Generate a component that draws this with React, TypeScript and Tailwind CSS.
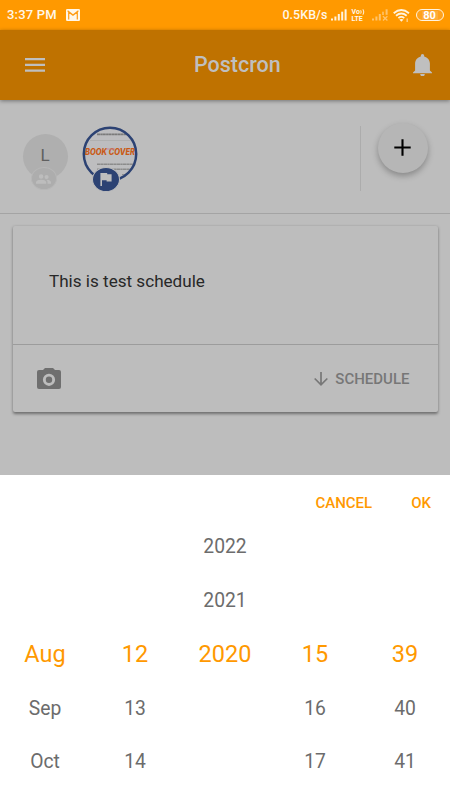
import React from "react";

const months = ["", "", "Aug", "Sep", "Oct"];
const days = ["", "", "12", "13", "14"];
const years = ["2022", "2021", "2020", "", ""];
const hours = ["", "", "15", "16", "17"];
const minutes = ["", "", "39", "40", "41"];

function SignalBars() {
  return (
    <svg width="16" height="12" viewBox="0 0 16 12" fill="#fff3df">
      <rect x="0" y="9.5" width="2" height="2" />
      <rect x="3.4" y="7.5" width="2" height="4" />
      <rect x="6.8" y="5" width="2" height="6.5" />
      <rect x="10.2" y="2.7" width="2" height="8.8" />
      <rect x="13.6" y="0.3" width="2" height="11.2" />
    </svg>
  );
}

function NoSignalBars() {
  return (
    <svg width="16" height="12" viewBox="0 0 16 12" fill="#ffc46c">
      <rect x="0" y="9.5" width="2" height="2" />
      <rect x="3.4" y="7.5" width="2" height="4" />
      <rect x="6.8" y="5" width="2" height="6.5" />
      <rect x="10.2" y="2.7" width="1.6" height="3.3" />
      <rect x="13.6" y="0.3" width="2" height="5.5" />
      <path d="M11 7.2l4.4 4.3M15.4 7.2L11 11.5" stroke="#ffc46c" strokeWidth="1.3" />
    </svg>
  );
}

function StatusBar() {
  return (
    <div className="flex h-[30px] items-center bg-[#ff9900] pl-[7px] pr-[6.5px] text-[#fff7ea]">
      <span className="w-[59px] whitespace-nowrap text-[13px] font-medium leading-[30px] tracking-[0.2px]">3:37 PM</span>
      <svg className="block" width="14" height="12" viewBox="0 0 14 12">
        <rect width="14" height="12" rx="1.3" fill="#fff7ea" />
        <path d="M2.7 10.5V3L7 6.3 11.3 3v7.5M1.6 1.8L7 6l5.4-4.2" fill="none" stroke="#ff9c14" strokeWidth="1.2" />
      </svg>
      <div className="ml-auto flex items-center">
        <span className="mr-[3px] whitespace-nowrap text-[12.4px] font-medium leading-[30px] tracking-[0.1px]">0.5KB/s</span>
        <SignalBars />
        <div className="ml-[5px] mr-[6px] flex w-[14px] flex-col gap-px text-[7px] font-bold leading-[6px]">
          <span className="flex h-[6px] items-center">
            Vo
            <svg width="5" height="6" viewBox="0 0 5 6" fill="none" stroke="#fff3df" strokeWidth="1">
              <path d="M.7 1.3q1 1.7 0 3.4M3 .3q1.6 2.7 0 5.4" />
            </svg>
          </span>
          <span className="h-[6px]">LTE</span>
        </div>
        <NoSignalBars />
        <svg className="ml-[5.5px] mr-[5.5px]" width="17" height="13" viewBox="0 0 17 13" fill="none" stroke="#fff3df" strokeWidth="1.8">
          <path d="M.7 4.2Q8.3-2.2 16 4.2M3 6.7q5.3-4.5 10.7 0M5.4 9.1q2.9-2.4 5.9 0" />
          <path d="M6.3 10.6q2-1.2 4.2 0L8.4 12.8z" fill="#fff3df" stroke="none" />
          <path d="M14.2 9.5v3.5" strokeWidth="1.4" stroke="#ffd08a" />
        </svg>
        <div className="flex h-[12px] w-[28px] items-center justify-center rounded-full border border-[#fff3df] bg-[#ffa21c]">
          <span className="flex h-[9px] w-[16px] items-center justify-center bg-[#ffac38] text-[11px] font-bold leading-none text-white">80</span>
        </div>
      </div>
    </div>
  );
}

function Header() {
  return (
    <header className="relative z-10 flex h-[70px] items-center bg-[#bf7200] pl-[25px] pr-[18px] text-[#bfbfbf] shadow-[0_1px_4px_rgba(0,0,0,0.4)]">
      <svg width="20" height="14" viewBox="0 0 20 14" fill="currentColor">
        <path d="M0 0h20v2.3H0zM0 5.8h20v2.3H0zM0 11.4h20v2.3H0z" />
      </svg>
      <h1 className="ml-[149px] text-[21.5px] font-medium leading-none">Postcron</h1>
      <svg className="ml-auto" width="19" height="22" viewBox="0 0 19 22" fill="currentColor">
        <path d="M9.5 0a1.7 1.7 0 0 0-1.7 1.7v.7C4.5 3.2 2.1 6.1 2.1 9.6v7L0 18.5v.7h19v-.7l-2.1-1.9v-7c0-3.5-2.4-6.4-5.7-7.2v-.7A1.7 1.7 0 0 0 9.5 0zM7.2 20a2.3 2.3 0 0 0 4.6 0z" />
      </svg>
    </header>
  );
}

function CoverPicture() {
  return (
    <svg width="56" height="56" viewBox="0 0 56 56">
      <defs>
        <clipPath id="cover">
          <circle cx="28" cy="28" r="25.5" />
        </clipPath>
      </defs>
      <circle cx="28" cy="28" r="27" fill="#bdbdbf" />
      <g clipPath="url(#cover)">
        <path d="M15 8.4h29" stroke="#7b7b7b" strokeWidth="1.6" strokeDasharray="3 .3 2.3 .2" />
        <path d="M8 14.5h42" stroke="#b0b0b0" strokeWidth="1" />
        <path d="M15 38.2h37M15 43.2h34" stroke="#8c8c8c" strokeWidth="1.5" strokeDasharray="3.6 .3 2.3 .3" />
        <path d="M40 48.5h7M39 51h5" stroke="#8e8e8e" strokeWidth="1.2" />
      </g>
      <text x="3" y="28.8" fontSize="8.4" fontFamily="Inter, sans-serif" fontWeight="800" fontStyle="italic" textLength="50" lengthAdjust="spacingAndGlyphs" fill="#c95a16">BOOK COVER</text>
      <path d="M24 23h9" stroke="#c1889a" strokeWidth="1" />
      <circle cx="28" cy="28" r="26.2" fill="none" stroke="#2c4273" strokeWidth="2.5" />
    </svg>
  );
}

function Accounts() {
  return (
    <section className="flex h-[113.5px] items-start border-b border-[#a4a4a4] pl-[22.5px] pr-[22.5px]">
      <div className="relative mt-[33.5px] h-[45px] w-[45px] rounded-full bg-[#afafaf]">
        <span className="flex h-full items-center justify-center text-[17px] text-[#606060]">L</span>
        <div className="absolute left-[8px] top-[33.5px] flex h-[23px] w-[26px] items-center justify-center rounded-[50%] border border-[#b7b7b7] bg-[#adadad]">
          <svg width="15" height="10" viewBox="1 5 22 14" fill="#bdbdbd">
            <path d="M16.5 12a2.9 2.9 0 1 0 0-6 2.9 2.9 0 0 0 0 6zm-8-.2a3.3 3.3 0 1 0 0-6.6 3.3 3.3 0 0 0 0 6.6zM8.5 13C6 13 1 14.2 1 16.7V19h15v-2.3C16 14.2 11 13 8.5 13zm8 0h-.7c1.2.9 2.2 2 2.2 3.7V19h5v-2.3c0-2.5-4.2-3.7-6.5-3.7z" />
          </svg>
        </div>
      </div>
      <div className="relative ml-[14.5px] mt-[25.5px] h-14 w-14">
        <CoverPicture />
        <div className="absolute left-[10px] top-[41px] flex h-[25px] w-[28px] items-center justify-center rounded-[50%] border-[1.5px] border-[#bdbdbd] bg-[#2c4273]">
          <svg width="12" height="13" viewBox="0 0 12 13" fill="#bebebe">
            <path d="M.4 0h6.8v1.2h4.4v7.4H6.6V7.2H2V13H.4z" />
          </svg>
        </div>
      </div>
      <div className="ml-auto mt-[26px] h-[65px] w-px bg-[#acacac]" />
      <button className="ml-[16.5px] mt-[22.5px] flex h-[50px] w-[50px] shrink-0 items-center justify-center rounded-full bg-[#b6b6b6] shadow-[0_3px_6px_rgba(0,0,0,0.28)]">
        <svg width="17" height="17" viewBox="0 0 17 17" stroke="#000" strokeWidth="2.1">
          <path d="M8.5.3v16.4M.3 8.5h16.4" />
        </svg>
      </button>
    </section>
  );
}

function PostCard() {
  return (
    <section className="mx-[12.5px] mt-[12.5px] h-[186px] rounded-[2px] bg-[#bdbdbd] shadow-[0_1.5px_3px_rgba(0,0,0,0.42)]">
      <div className="h-[119px] border-b border-[#9c9c9c] pl-[36.5px] pt-[42.5px] text-[17.1px] leading-6 text-[#282828]">This is test schedule</div>
      <div className="flex h-[67px] items-center pl-[24.5px] pr-[28px] text-[#777]">
        <svg width="24" height="21" viewBox="0 0 24 21" fill="#6f6f6f">
          <path fillRule="evenodd" d="M8 0h8l2 2h4a2 2 0 0 1 2 2v15a2 2 0 0 1-2 2H2a2 2 0 0 1-2-2V4a2 2 0 0 1 2-2h4zM12 5.7a6.1 6.1 0 1 0 0 12.2 6.1 6.1 0 0 0 0-12.2zm0 2.9a3.2 3.2 0 1 1 0 6.4 3.2 3.2 0 0 1 0-6.4z" />
        </svg>
        <svg className="ml-auto mr-[7px]" width="14" height="14" viewBox="0 0 14 14" fill="none" stroke="currentColor" strokeWidth="1.7">
          <path d="M7 0v12.6M.7 6.5L7 12.8l6.3-6.3" />
        </svg>
        <span className="pt-px text-[15px] font-medium leading-none">SCHEDULE</span>
      </div>
    </section>
  );
}

function Column({ values }: { values: string[] }) {
  return (
    <div className="grid grid-rows-5 text-center">
      {values.map((value, i) => (
        <div key={i} className={i === 2 ? "flex items-center justify-center text-[23.5px] leading-none text-[#ff9900]" : "flex items-center justify-center text-[19.3px] leading-none text-[#6c6c6c]"}>
          {value}
        </div>
      ))}
    </div>
  );
}

function DatePicker() {
  return (
    <section className="h-[324.6px] shrink-0 bg-white">
      <div className="flex h-[44.6px] items-start justify-end gap-[39px] pr-[19px] pt-[19.6px] text-[15px] font-medium leading-4 text-[#ff9900]">
        <button>CANCEL</button>
        <button>OK</button>
      </div>
      <div className="grid h-[269px] grid-cols-5">
        <Column values={months} />
        <Column values={days} />
        <Column values={years} />
        <Column values={hours} />
        <Column values={minutes} />
      </div>
    </section>
  );
}

export default function App() {
  return (
    <main className="flex h-[800px] w-[450px] flex-col overflow-hidden bg-[#bdbdbd] font-[Roboto,sans-serif]">
      <StatusBar />
      <Header />
      <div className="h-[375.4px]">
        <Accounts />
        <PostCard />
      </div>
      <DatePicker />
    </main>
  );
}
